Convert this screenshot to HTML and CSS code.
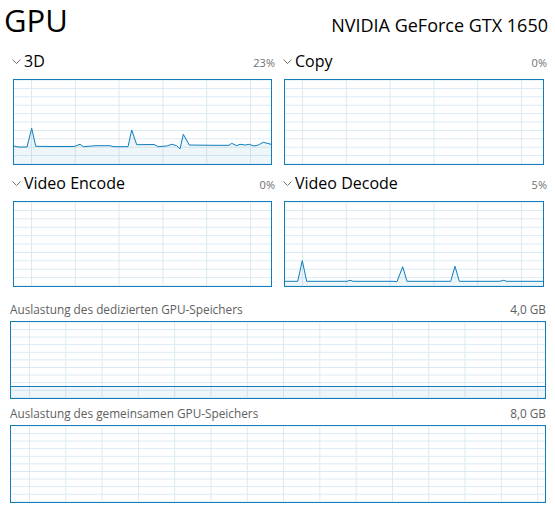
FILE: index.html
```html
<!DOCTYPE html>
<html lang="de">

<head>
    <meta charset="UTF-8">
    <meta name="viewport" content="width=device-width, initial-scale=1.0">
    <title>GPU</title>
    <link rel="stylesheet" href="styles.css">
</head>

<body>
    <div class="panel">
        <div class="header">
            <h1 class="title">GPU</h1>
            <div class="model">NVIDIA GeForce GTX 1650</div>
        </div>

        <div class="engines">
            <div class="engine">
                <div class="engine-head">
                    <svg class="chevron" width="9" height="5" viewBox="0 0 9 5"><path d="M0.5 0.5 L4.5 4.5 L8.5 0.5" /></svg>
                    <span class="engine-name">3D</span>
                    <span class="engine-value">23%</span>
                </div>
                <div class="chart chart-small">
                    <svg viewBox="0 0 257 84" preserveAspectRatio="none">
                        <polygon class="area" points="0,66 4,67 13,67 17.7,48.3 21.7,66.3 40,66.5 60,66.5 66,64.3 69.3,66.7 82,65.7 96,65.7 100,66.7 114,66.7 117.7,50 122.7,64.7 140,64.5 144.3,66.7 152.7,66 157.7,64.3 162.7,65.7 166,69 169.3,54.3 175.3,65 200,65.3 215,65.3 217.7,63.3 222.7,65.7 226,64.3 231,65 235.3,64.3 240,66 244.3,65 249.3,62.3 257,64.3 257,84 0,84" />
                        <polyline class="line" points="0,66 4,67 13,67 17.7,48.3 21.7,66.3 40,66.5 60,66.5 66,64.3 69.3,66.7 82,65.7 96,65.7 100,66.7 114,66.7 117.7,50 122.7,64.7 140,64.5 144.3,66.7 152.7,66 157.7,64.3 162.7,65.7 166,69 169.3,54.3 175.3,65 200,65.3 215,65.3 217.7,63.3 222.7,65.7 226,64.3 231,65 235.3,64.3 240,66 244.3,65 249.3,62.3 257,64.3" />
                    </svg>
                </div>
            </div>

            <div class="engine">
                <div class="engine-head">
                    <svg class="chevron" width="9" height="5" viewBox="0 0 9 5"><path d="M0.5 0.5 L4.5 4.5 L8.5 0.5" /></svg>
                    <span class="engine-name">Copy</span>
                    <span class="engine-value">0%</span>
                </div>
                <div class="chart chart-small"></div>
            </div>

            <div class="engine">
                <div class="engine-head">
                    <svg class="chevron" width="9" height="5" viewBox="0 0 9 5"><path d="M0.5 0.5 L4.5 4.5 L8.5 0.5" /></svg>
                    <span class="engine-name">Video Encode</span>
                    <span class="engine-value">0%</span>
                </div>
                <div class="chart chart-small"></div>
            </div>

            <div class="engine">
                <div class="engine-head">
                    <svg class="chevron" width="9" height="5" viewBox="0 0 9 5"><path d="M0.5 0.5 L4.5 4.5 L8.5 0.5" /></svg>
                    <span class="engine-name">Video Decode</span>
                    <span class="engine-value">5%</span>
                </div>
                <div class="chart chart-small">
                    <svg viewBox="0 0 258 84" preserveAspectRatio="none">
                        <polygon class="area" points="0,79.3 12.7,79.3 17.3,58.7 21.7,79.3 62,79.3 65,78.3 68,79.3 108,79.3 112,79.6 117.7,64.7 122,79.3 165.7,79.3 170,64.3 174.3,79.3 215,79.3 218.3,78.3 222,79.3 258,79.3 258,84 0,84" />
                        <polyline class="line" points="0,79.3 12.7,79.3 17.3,58.7 21.7,79.3 62,79.3 65,78.3 68,79.3 108,79.3 112,79.6 117.7,64.7 122,79.3 165.7,79.3 170,64.3 174.3,79.3 215,79.3 218.3,78.3 222,79.3 258,79.3" />
                    </svg>
                </div>
            </div>
        </div>

        <div class="memory">
            <div class="memory-head">
                <span>Auslastung des dedizierten GPU-Speichers</span>
                <span>4,0 GB</span>
            </div>
            <div class="chart chart-wide">
                <svg viewBox="0 0 534 76" preserveAspectRatio="none">
                    <rect class="area" x="0" y="64" width="534" height="12" />
                    <polyline class="line" points="0,64.5 534,64.5" />
                </svg>
            </div>
        </div>

        <div class="memory">
            <div class="memory-head">
                <span>Auslastung des gemeinsamen GPU-Speichers</span>
                <span>8,0 GB</span>
            </div>
            <div class="chart chart-wide"></div>
        </div>
    </div>
</body>

</html>
```

FILE: styles.css
```css
* {
    padding: 0;
    margin: 0;
    box-sizing: border-box;
}

body {
    background-color: #fff;
    font-family: "Open Sans", "Noto Sans", sans-serif;
    color: #000;
}

.panel {
    width: 555px;
}

.header {
    display: flex;
    justify-content: space-between;
    align-items: baseline;
    height: 40px;
    padding: 0 7px 0 4px;
}

.title {
    font-size: 31px;
    font-weight: 400;
    line-height: 40px;
}

.model {
    font-size: 18px;
    line-height: 24px;
}

.engines {
    display: grid;
    grid-template-columns: 259px 260px;
    column-gap: 12px;
    row-gap: 7px;
    margin: 10px 0 0 13px;
}

.engine-head {
    display: flex;
    align-items: baseline;
    height: 22px;
    margin-left: -1px;
    margin-right: -3px;
}

.chevron {
    fill: none;
    stroke: #777;
    stroke-width: 1;
    align-self: center;
    margin-right: 3px;
}

.engine-name {
    font-size: 16px;
    line-height: 22px;
}

.engine-value {
    margin-left: auto;
    font-size: 11px;
    color: #707070;
}

/* chart box with grid lines */
.chart {
    border: 1px solid #117dbb;
    background-color: #fff;
    background-image: linear-gradient(90deg, #d9eaf4 1px, transparent 1px), linear-gradient(#d9eaf4 1px, transparent 1px);
}

.chart svg {
    display: block;
    width: 100%;
    height: 100%;
}

.chart-small {
    height: 86px;
    margin-top: 7px;
    background-size: 43.8px 100%, 100% 8.4px;
    background-position: 17px 0, 0 8px;
}

.chart-wide {
    height: 78px;
    margin-top: 4px;
    background-size: 36.3px 100%, 100% 7.6px;
    background-position: 18px 0, 0 7px;
}

.area {
    fill: rgba(17, 125, 187, 0.07);
}

.line {
    fill: none;
    stroke: #117dbb;
    stroke-width: 1;
}

.memory {
    margin: 0 9px 0 10px;
}

.memory-head {
    display: flex;
    justify-content: space-between;
    font-size: 11.8px;
    line-height: 16px;
    color: #606060;
}

.engines + .memory {
    margin-top: 14px;
}

.memory + .memory {
    margin-top: 6px;
}
```
